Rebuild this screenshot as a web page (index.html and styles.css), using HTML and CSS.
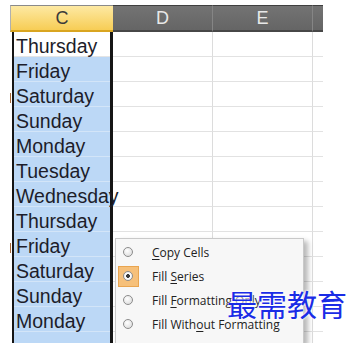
FILE: index.html
```html
<!DOCTYPE html>
<html lang="en">
<head>
    <meta charset="UTF-8">
    <title>Fill Series</title>
    <link rel="stylesheet" href="styles.css">
</head>
<body>

<div class="sheet">
    <!-- Column headers -->
    <div class="head">
        <div class="hcell picked">C</div>
        <div class="hcell">D</div>
        <div class="hcell">E</div>
        <div class="hcell stub"></div>
    </div>

    <div class="grid">
        <div class="colc">
            <div class="sel">
                <div class="cell active">Thursday</div>
                <div class="cell">Friday</div>
                <div class="cell mark">Saturday</div>
                <div class="cell">Sunday</div>
                <div class="cell">Monday</div>
                <div class="cell">Tuesday</div>
                <div class="cell">Wednesday</div>
                <div class="cell">Thursday</div>
                <div class="cell mark">Friday</div>
                <div class="cell">Saturday</div>
                <div class="cell">Sunday</div>
                <div class="cell">Monday</div>
                <div class="cell"></div>
            </div>
        </div>
        <div class="col">
            <div></div><div></div><div></div><div></div><div></div><div></div><div></div>
            <div></div><div></div><div></div><div></div><div></div><div></div>
        </div>
        <div class="col">
            <div></div><div></div><div></div><div></div><div></div><div></div><div></div>
            <div></div><div></div><div></div><div></div><div></div><div></div>
        </div>
        <div class="col stub">
            <div></div><div></div><div></div><div></div><div></div><div></div><div></div>
            <div></div><div></div><div></div><div></div><div></div><div></div>
        </div>
    </div>

    <!-- Auto fill options menu -->
    <div class="menu">
        <div class="item"><span class="radio"></span><span><u>C</u>opy Cells</span></div>
        <div class="item on"><span class="radio"></span><span>Fill <u>S</u>eries</span></div>
        <div class="item"><span class="radio"></span><span>Fill <u>F</u>ormatting Only</span></div>
        <div class="item"><span class="radio"></span><span>Fill With<u>o</u>ut Formatting</span></div>
    </div>

    <div class="stamp">最需教育</div>
</div>

</body>
</html>
```

FILE: styles.css
```css
body {
    margin: 0;
    background: #fff;
    font-family: Arial, "Liberation Sans", sans-serif;
    overflow: hidden;
}
.sheet {
    position: relative;
    width: 313px;
    margin: 5px 0 0 10px;
}

/* header row */
.head {
    display: grid;
    grid-template-columns: 103px 100px 100px 10px;
    height: 27px;
}
.hcell {
    background: linear-gradient(#737373, #656565);
    border-top: 1px solid #3f3f3f;
    border-bottom: 2px solid #474747;
    border-right: 1px solid #858585;
    color: #e8e8e8;
    font-size: 18px;
    line-height: 24px;
    text-align: center;
}
.hcell.picked {
    background: linear-gradient(#fde9a3, #f7cd55);
    border-top-color: #8a8a8a;
    border-bottom-color: #d9a520;
    border-left: 1px solid #b0b0b0;
    border-right: none;
    color: #3a3a3a;
}
.hcell.stub {
    border-right: none;
}

/* body */
.grid {
    display: grid;
    grid-template-columns: 103px 100px 100px 10px;
    height: 311px;
    overflow: hidden;
}
.colc {
    padding-left: 2px;
}
.sel {
    border-left: 2px solid #151515;
    border-right: 3px solid #151515;
}
.cell {
    position: relative;
    height: 25px;
    box-sizing: border-box;
    padding: 4px 0 0 2px;
    background: #bcd8f6;
    border-bottom: 1px solid #d3e5f8;
    color: #1d1d2a;
    font-size: 19.5px;
    line-height: 21px;
    white-space: nowrap;
    z-index: 2;
}
.cell.active {
    background: #fff;
    border-bottom-color: #e4e4e4;
}
.cell.mark::before {
    content: "";
    position: absolute;
    left: -5px;
    top: 11px;
    width: 2px;
    height: 10px;
    background: #a86a3a;
}
.col div {
    height: 25px;
    box-sizing: border-box;
    border-bottom: 1px solid #e2e2e2;
    border-right: 1px solid #dcdcdc;
}
.col.stub div {
    border-right: none;
}

/* popup menu */
.menu {
    position: absolute;
    left: 105px;
    top: 233px;
    width: 187px;
    height: 104px;
    padding-top: 1px;
    background: #f7f7f7;
    border: 1px solid #c9c9c9;
    border-bottom: none;
    box-shadow: 4px 3px 5px rgba(0, 0, 0, 0.28);
    font-family: "Open Sans", sans-serif;
    font-size: 12px;
    color: #222;
    z-index: 3;
}
.item {
    display: flex;
    align-items: center;
    height: 24px;
}
.radio {
    position: relative;
    width: 21px;
    height: 21px;
    margin: 0 13px 0 2px;
    box-sizing: border-box;
}
.radio::before {
    content: "";
    position: absolute;
    left: 5px;
    top: 5px;
    width: 10px;
    height: 10px;
    box-sizing: border-box;
    border-radius: 50%;
    border: 1px solid #8c8c8c;
    background: radial-gradient(circle at 40% 35%, #fff, #d6d6d6);
}
.item.on .radio {
    background: #f6c07a;
    border: 1px solid #e9a550;
}
.item.on .radio::before {
    left: 4px;
    top: 4px;
    background: radial-gradient(circle, #3a3a3a 0 1.6px, #fff 2.2px, #e2e2e2);
}
.item u {
    text-underline-offset: 2px;
}

/* watermark */
.stamp {
    position: absolute;
    left: 217px;
    top: 276px;
    font-family: "Noto Sans CJK SC", sans-serif;
    font-size: 30px;
    color: #1a2ce6;
    text-shadow: 0 0 2px #fff, 0 0 3px #fff;
    white-space: nowrap;
    z-index: 4;
}
```
